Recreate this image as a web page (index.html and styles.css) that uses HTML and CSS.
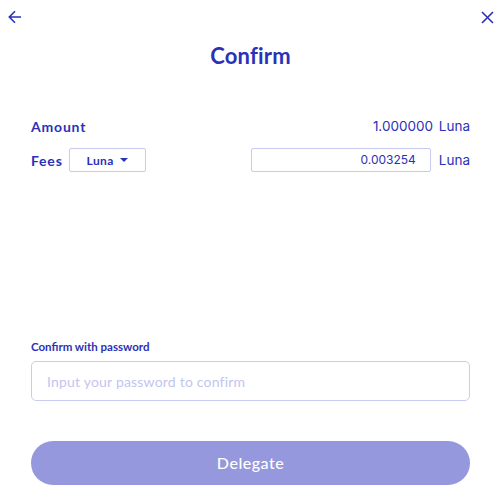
FILE: index.html
```html
<!DOCTYPE html>
<html lang="en">
<head>
    <meta charset="UTF-8">
    <title>Confirm</title>
    <link rel="stylesheet" href="styles.css">
</head>
<body>
    <div class="modal">
        <div class="topbar">
            <button class="icon-btn" aria-label="Back">
                <svg width="14" height="14" viewBox="0 0 14 14" fill="none" stroke="currentColor" stroke-width="1.6">
                    <path d="M13 7H1.5M7 1.3L1.3 7L7 12.7"/>
                </svg>
            </button>
            <button class="icon-btn" aria-label="Close">
                <svg width="13" height="13" viewBox="0 0 13 13" fill="none" stroke="currentColor" stroke-width="1.6">
                    <path d="M1 1L12 12M12 1L1 12"/>
                </svg>
            </button>
        </div>

        <h1 class="title">Confirm</h1>

        <div class="rows">
            <div class="row">
                <span class="label">Amount</span>
                <span class="value">1.000000 <span class="unit">Luna</span></span>
            </div>
            <div class="row">
                <div class="fee-left">
                    <span class="label">Fees</span>
                    <div class="select">Luna <span class="caret"></span></div>
                </div>
                <div class="fee-right">
                    <div class="fee-input">0.003254</div>
                    <span class="unit">Luna</span>
                </div>
            </div>
        </div>

        <div class="password">
            <label class="pw-label">Confirm with password</label>
            <input class="pw-input" type="password" placeholder="Input your password to confirm">
        </div>

        <button class="submit">Delegate</button>
    </div>
</body>
</html>
```

FILE: styles.css
```css
body {
    margin: 0;
    background: #fff;
    font-family: Lato, "Noto Sans", sans-serif;
    color: #2b31b7;
}
.modal {
    width: 501px;
    height: 498px;
    box-sizing: border-box;
    padding: 0 31px;
}
.topbar {
    display: flex;
    justify-content: space-between;
    margin: 0 -23px;
    padding-top: 10px;
    height: 16px;
}
.icon-btn {
    border: none;
    background: none;
    padding: 0;
    color: #2b31b7;
    display: flex;
}
.icon-btn:last-child {
    margin-top: 1px;
    margin-right: -1px;
}
.title {
    margin: 17px 0 0;
    text-align: center;
    font-size: 22px;
    font-weight: 700;
    line-height: 26px;
    letter-spacing: 0.2px;
}
.rows {
    margin-top: 47px;
    display: flex;
    flex-direction: column;
    gap: 12px;
}
.row {
    display: flex;
    justify-content: space-between;
    align-items: center;
    min-height: 20px;
}
.label {
    font-size: 14px;
    font-weight: 700;
    letter-spacing: 0.8px;
}
.value {
    font-family: Inter, "Noto Sans", sans-serif;
    font-size: 13.5px;
    color: #2b31b7;
}
.unit {
    font-family: Inter, "Noto Sans", sans-serif;
    font-size: 13.5px;
    margin-left: 2px;
}
.fee-left {
    display: flex;
    align-items: center;
    gap: 6px;
}
.select {
    box-sizing: border-box;
    width: 77px;
    height: 24px;
    border: 1px solid #c9cbf0;
    border-radius: 2px;
    font-size: 12px;
    font-weight: 700;
    letter-spacing: 0.4px;
    display: flex;
    align-items: center;
    justify-content: center;
    gap: 6px;
}
.caret {
    width: 0;
    height: 0;
    border-left: 4px solid transparent;
    border-right: 4px solid transparent;
    border-top: 4px solid #2b31b7;
}
.fee-right {
    display: flex;
    align-items: center;
    gap: 6px;
}
.fee-input {
    box-sizing: border-box;
    width: 180px;
    height: 24px;
    border: 1px solid #c9cbf0;
    border-radius: 2px;
    font-family: Inter, "Noto Sans", sans-serif;
    font-size: 12px;
    text-align: right;
    padding: 0 14px;
    line-height: 22px;
}
.password {
    margin-top: 168px;
    display: flex;
    flex-direction: column;
}
.pw-label {
    font-size: 11.5px;
    font-weight: 700;
    line-height: 14px;
}
.pw-input {
    margin-top: 7px;
    box-sizing: border-box;
    width: 100%;
    height: 40px;
    border: 1px solid #c9cbf0;
    border-radius: 5px;
    padding: 0 15px;
    font-family: Lato, "Noto Sans", sans-serif;
    font-size: 14px;
    letter-spacing: 0.2px;
    outline: none;
}
.pw-input::placeholder {
    color: #c3c5ee;
}
.submit {
    margin-top: 40px;
    width: 100%;
    height: 44px;
    padding-bottom: 3px;
    border: none;
    border-radius: 22px;
    background: #9598dc;
    color: #fff;
    font-family: Lato, "Noto Sans", sans-serif;
    font-size: 16px;
    font-weight: 500;
    letter-spacing: 0.5px;
}
```
